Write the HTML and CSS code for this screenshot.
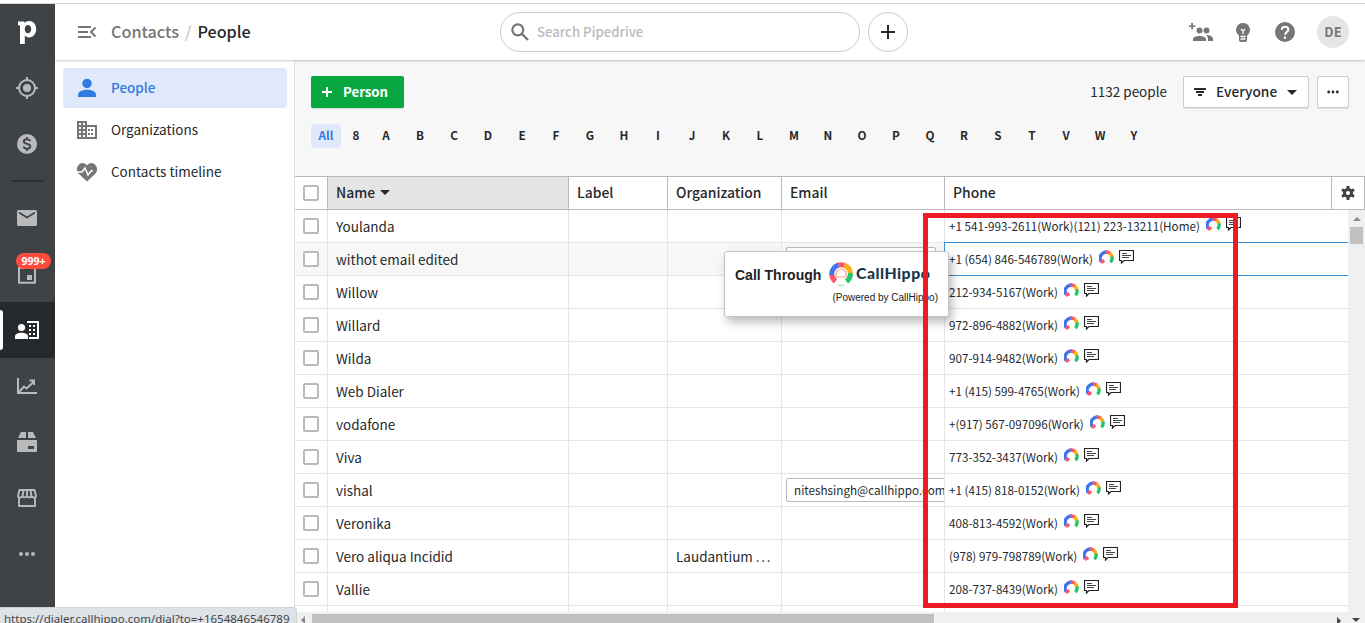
FILE: index.html
```
<!DOCTYPE html>
<html lang="en">
<head>
<meta charset="utf-8">
<title>Contacts / People</title>
<link rel="stylesheet" href="styles.css">
</head>
<body>
<svg class="defs" width="0" height="0">
  <symbol id="box" viewBox="0 0 16 16"><rect x="1" y="1" width="14" height="14" rx="1" fill="#fff" stroke="#b9babb" stroke-width="2"/></symbol>
  <symbol id="arc" viewBox="0 0 16 16"><g fill="none" stroke-width="3.600"><path d="M2.600 12.500A5.900 5.900 0 0 1 4.300 3.400" stroke="#3f74ee"/><path d="M3.800 3.800A6 6 0 0 1 8.500 2.200" stroke="#3f74ee"/><path d="M7 2.200A6 6 0 0 1 11.500 3.400" stroke="#fb566b"/><path d="M11 3.200A6 6 0 0 1 13.700 7.500" stroke="#ffab12"/><path d="M13.700 7A6 6 0 0 1 12.200 13" stroke="#23c56b"/><path d="M2 13.300 5.600 11" stroke="#fb566b"/></g></symbol>
  <symbol id="msg" viewBox="0 0 15 14"><path d="M.5.5h14v10H5L2.500 13v-2.500h-2z" fill="#fff" stroke="#222" stroke-width="1.200"/><path d="M3 3.500h5M3 5.500h9M3 7.500h7" stroke="#444" stroke-width="1"/></symbol>
</svg>
<div class="topline"></div>
<div class="app">
  <aside class="rail">
    <div class="rail-item"><svg width="20" height="26" viewBox="0 0 20 26"><path fill="#fff" fill-rule="evenodd" d="M1 2.500h6.300v1.800C8.500 2.700 10.100 1.900 12.100 1.900c4.200 0 7.100 3.400 7.100 8.100 0 5-3 8.400-7.200 8.400-1.800 0-3.300-.7-4.200-1.800V25H3V7c0-.6-.3-.8-.8-.8H1zM11 5.900c-1.900 0-3.300 1.500-3.300 4.200s1.300 4.200 3.200 4.200c2 0 3.300-1.700 3.300-4.200S12.900 5.900 11 5.900z"/></svg></div>
    <div class="rail-item"><svg width="24" height="24" viewBox="0 0 24 24"><g fill="none" stroke="currentColor" stroke-width="2"><circle cx="12" cy="12" r="8"/><path d="M12 1v4M12 19v4M1 12h4M19 12h4"/></g><circle cx="12" cy="12" r="4" fill="currentColor"/></svg></div>
    <div class="rail-item"><svg width="24" height="24" viewBox="0 0 24 24"><circle cx="12" cy="12" r="10" fill="currentColor"/><path d="M15.300 9.200C14.800 7.900 13.700 7.300 12 7.300c-2 0-3.200.9-3.200 2.200 0 3.200 6.600 1.500 6.600 4.800 0 1.500-1.300 2.400-3.300 2.400-1.900 0-3.200-.8-3.600-2.200M12 5v2M12 17v2" fill="none" stroke="#404346" stroke-width="1.900"/></svg></div>
    <div class="rail-rule"></div>
    <div class="rail-item"><svg width="24" height="24" viewBox="0 0 24 24"><rect x="2" y="4" width="20" height="16" rx="1.500" fill="currentColor"/><path d="M4 6.500l8 5 8-5" fill="none" stroke="#404346" stroke-width="1.500"/></svg></div>
    <div class="rail-item"><svg width="24" height="24" viewBox="0 0 24 24"><path d="M4 4h16v16.800H4z" fill="none" stroke="currentColor" stroke-width="2" stroke-linejoin="round"/><path d="M4 3h16v4H4zM12 13h5v5h-5z" fill="currentColor"/></svg><span class="badge">999+</span></div>
    <div class="rail-item active"><svg width="26" height="24" viewBox="0 0 26 24"><g fill="#fff"><circle cx="7.500" cy="9.500" r="3.600"/><path d="M1 21v-2.500c0-5 13-5 13 0V21z"/><path d="M13 3h12v18H15v-2h8V5H13z"/><path d="M15 7h2v2h-2zM19 7h2v2h-2zM15 11h2v2h-2zM19 11h2v2h-2zM15 15h2v2h-2zM19 15h2v2h-2z"/></g></svg></div>
    <div class="rail-item"><svg width="24" height="24" viewBox="0 0 24 24"><path d="M3 4v15h19M4 18l5-5.500 2.500 2L19 7.500M14.500 6.500H19V11" fill="none" stroke="currentColor" stroke-width="2"/></svg></div>
    <div class="rail-item"><svg width="24" height="24" viewBox="0 0 24 24"><path d="M6 2h5v6H3zM13 2h5l3 6h-8zM2 10h20v10.500c0 1-.5 1.500-1.500 1.500h-17c-1 0-1.500-.5-1.500-1.500zM13 16v3h6v-3z" fill="currentColor" fill-rule="evenodd"/></svg></div>
    <div class="rail-item"><svg width="24" height="24" viewBox="0 0 24 24"><path d="M4 11v9h16v-9M4.500 4h15L21 10c0 2-4 2-4.500 0-.8 1.800-4 1.800-4.500 0-.5 1.800-3.700 1.800-4.500 0C7 12 3 12 3 10zM8.500 4l-1 6.500M12 4v6.500M15.500 4l1 6.500" fill="none" stroke="currentColor" stroke-width="1.900" stroke-linejoin="round"/></svg></div>
    <div class="rail-item"><svg width="24" height="24" viewBox="0 0 24 24" fill="currentColor"><circle cx="6" cy="12" r="2"/><circle cx="12" cy="12" r="2"/><circle cx="18" cy="12" r="2"/></svg></div>
  </aside>
  <div class="stage">
    <header class="bar">
      <svg class="collapse" width="20" height="14" viewBox="0 0 20 14"><path d="M1 2h13M1 7h10M1 12h13M18.500 2.500 14 7l4.500 4.500" fill="none" stroke="#747678" stroke-width="2"/></svg>
      <div class="crumbs"><span class="muted">Contacts</span><span class="slash">/</span><span>People</span></div>
      <div class="search"><svg width="18" height="18" viewBox="0 0 18 18"><circle cx="6.800" cy="6.800" r="5.500" fill="none" stroke="#747678" stroke-width="2.200"/><path d="M11 11l6 6" stroke="#747678" stroke-width="2.400"/></svg><span>Search Pipedrive</span></div>
      <div class="add"><svg width="14" height="14" viewBox="0 0 14 14"><path d="M7 0v14M0 7h14" stroke="#26292c" stroke-width="2"/></svg></div>
      <div class="tools">
        <svg width="26" height="20" viewBox="0 0 26 20" fill="#747678"><path d="M3 1h2v2.500h2.500v1.500H5v2.500H3.300V5H1V3.500h2.300z"/><circle cx="11.500" cy="8.500" r="3"/><circle cx="18.500" cy="8.500" r="3"/><path d="M5 19v-2c0-4 13-4 13 0v2zM18 13c4 0 7 1.500 7 4v2h-5v-2c0-2-1-3.200-2-4z"/></svg>
        <svg width="16" height="20" viewBox="0 0 16 20"><path fill="#747678" d="M8 1a7 7 0 0 0-4 12.700V18c0 1 .5 2 2 2h4c1.500 0 2-1 2-2v-4.300A7 7 0 0 0 8 1z"/><path d="M6 7l2 2 2-2M8 9v3M5.500 14.500h5M5.500 17h5" fill="none" stroke="#fff" stroke-width="1.300"/></svg>
        <svg width="20" height="20" viewBox="0 0 20 20"><circle cx="10" cy="10" r="10" fill="#747678"/><path d="M6.800 7.800c0-4 6.600-4 6.600-.3 0 2.500-3.300 2.500-3.300 5.300M10 14.500v2.300" fill="none" stroke="#fff" stroke-width="2.100"/></svg>
        <div class="avatar">DE</div>
      </div>
    </header>
    <div class="body">
      <nav class="side">
        <div class="side-item current"><svg width="24" height="24" viewBox="0 0 24 24" fill="#317ae2"><circle cx="12" cy="7.500" r="4.700"/><path d="M3 21v-2c0-7 18-7 18 0v2z"/></svg><span>People</span></div>
        <div class="side-item"><svg width="24" height="24" viewBox="0 0 24 24"><path d="M2 3h10v4h10v14H2zM4 5v2h2V5zm4 0v2h2V5zM4 9v2h2V9zm4 0v2h2V9zm4 0v10h8V9zM4 13v2h2v-2zm4 0v2h2v-2zM4 17v2h2v-2zm4 0v2h2v-2z" fill="#747678" fill-rule="evenodd"/><path d="M13 11h2v2h-2zM16 11h2v2h-2zM13 15h2v2h-2zM16 15h2v2h-2z" fill="#747678"/></svg><span>Organizations</span></div>
        <div class="side-item"><svg width="24" height="24" viewBox="0 0 24 24"><path d="M12 21.500 4 14C-1 9 4 2.800 7.500 3c2 0 3.500 1 4.500 2.500C13 4 14.500 3 16.500 3 20 2.800 25 9 20 14z" fill="#747678"/><path d="M2 12h5l3-4 3 7 3-4h2" fill="none" stroke="#fff" stroke-width="1.600"/></svg><span>Contacts timeline</span></div>
      </nav>
      <main class="main">
        <div class="actions">
          <div class="btn-add"><svg width="10" height="10" viewBox="0 0 10 10"><path d="M5 0v10M0 5h10" stroke="#fff" stroke-width="2"/></svg><span>Person</span></div>
          <span class="count">1132 people</span>
          <div class="btn filter"><svg width="12" height="8" viewBox="0 0 12 8"><path d="M0 1h12M2 4h8M4 7h4" stroke="#26292c" stroke-width="1.800"/></svg><span>Everyone</span><i class="caret"></i></div>
          <div class="btn more"><svg width="12" height="4" viewBox="0 0 12 4" fill="#26292c"><circle cx="1.700" cy="2" r="1.400"/><circle cx="6" cy="2" r="1.400"/><circle cx="10.300" cy="2" r="1.400"/></svg></div>
        </div>
        <div class="letters"><b class="all">All</b><b class="num">8</b><b>A</b><b>B</b><b>C</b><b>D</b><b>E</b><b>F</b><b>G</b><b>H</b><b>I</b><b>J</b><b>K</b><b>L</b><b>M</b><b>N</b><b>O</b><b>P</b><b>Q</b><b>R</b><b>S</b><b>T</b><b>V</b><b>W</b><b>Y</b></div>
        <div class="head">
          <div class="check"><svg><use href="#box"/></svg></div><div class="sorted">Name<i class="caret"></i></div><div>Label</div><div>Organization</div><div>Email</div><div>Phone</div>
          <div class="gear"><svg width="14" height="14" viewBox="0 0 14 14"><circle cx="7" cy="7" r="3.600" fill="none" stroke="#404346" stroke-width="3"/><path d="M7 0v3M7 11v3M.9 3.500l2.600 1.500M10.500 9l2.600 1.500M.9 10.500 3.500 9M10.500 5l2.600-1.500" stroke="#404346" stroke-width="3"/></svg></div>
        </div>
        <div class="table">
          <div class="rows">
            <div class="row"><div class="check"><svg><use href="#box"/></svg></div><div>Youlanda</div><div></div><div></div><div></div><div class="phone"><span>+1 541-993-2611(Work)(121) 223-13211(Home)</span><svg class="arc"><use href="#arc"/></svg><svg class="msg"><use href="#msg"/></svg></div></div>
            <div class="row hover"><div class="check"><svg><use href="#box"/></svg></div><div>withot email edited</div><div></div><div></div><div class="mail"><span class="chip blank"></span></div><div class="phone focus"><span>+1 (654) 846-546789(Work)</span><svg class="arc"><use href="#arc"/></svg><svg class="msg"><use href="#msg"/></svg></div></div>
            <div class="row"><div class="check"><svg><use href="#box"/></svg></div><div>Willow</div><div></div><div></div><div></div><div class="phone"><span>212-934-5167(Work)</span><svg class="arc"><use href="#arc"/></svg><svg class="msg"><use href="#msg"/></svg></div></div>
            <div class="row"><div class="check"><svg><use href="#box"/></svg></div><div>Willard</div><div></div><div></div><div></div><div class="phone"><span>972-896-4882(Work)</span><svg class="arc"><use href="#arc"/></svg><svg class="msg"><use href="#msg"/></svg></div></div>
            <div class="row"><div class="check"><svg><use href="#box"/></svg></div><div>Wilda</div><div></div><div></div><div></div><div class="phone"><span>907-914-9482(Work)</span><svg class="arc"><use href="#arc"/></svg><svg class="msg"><use href="#msg"/></svg></div></div>
            <div class="row"><div class="check"><svg><use href="#box"/></svg></div><div>Web Dialer</div><div></div><div></div><div></div><div class="phone"><span>+1 (415) 599-4765(Work)</span><svg class="arc"><use href="#arc"/></svg><svg class="msg"><use href="#msg"/></svg></div></div>
            <div class="row"><div class="check"><svg><use href="#box"/></svg></div><div>vodafone</div><div></div><div></div><div></div><div class="phone"><span>+(917) 567-097096(Work)</span><svg class="arc"><use href="#arc"/></svg><svg class="msg"><use href="#msg"/></svg></div></div>
            <div class="row"><div class="check"><svg><use href="#box"/></svg></div><div>Viva</div><div></div><div></div><div></div><div class="phone"><span>773-352-3437(Work)</span><svg class="arc"><use href="#arc"/></svg><svg class="msg"><use href="#msg"/></svg></div></div>
            <div class="row"><div class="check"><svg><use href="#box"/></svg></div><div>vishal</div><div></div><div></div><div class="mail"><span class="chip">niteshsingh@callhippo.com</span></div><div class="phone"><span>+1 (415) 818-0152(Work)</span><svg class="arc"><use href="#arc"/></svg><svg class="msg"><use href="#msg"/></svg></div></div>
            <div class="row"><div class="check"><svg><use href="#box"/></svg></div><div>Veronika</div><div></div><div></div><div></div><div class="phone"><span>408-813-4592(Work)</span><svg class="arc"><use href="#arc"/></svg><svg class="msg"><use href="#msg"/></svg></div></div>
            <div class="row"><div class="check"><svg><use href="#box"/></svg></div><div>Vero aliqua Incidid</div><div></div><div>Laudantium <span class="dots">...</span></div><div></div><div class="phone"><span>(978) 979-798789(Work)</span><svg class="arc"><use href="#arc"/></svg><svg class="msg"><use href="#msg"/></svg></div></div>
            <div class="row"><div class="check"><svg><use href="#box"/></svg></div><div>Vallie</div><div></div><div></div><div></div><div class="phone"><span>208-737-8439(Work)</span><svg class="arc"><use href="#arc"/></svg><svg class="msg"><use href="#msg"/></svg></div></div>
            <div class="row"><div></div><div></div><div></div><div></div><div></div><div></div></div>
          </div>
          <div class="vscroll"><i class="up"></i><div class="vthumb"></div></div>
        </div>
        <div class="hscroll"><i class="left"></i><div class="hthumb"></div><i class="right"></i><i class="down"></i></div>
      </main>
    </div>
  </div>
</div>
<div class="popup">
  <div class="popup-main"><span class="call">Call Through</span>
    <svg width="24" height="24" viewBox="0 0 24 24"><g fill="none" stroke-width="5"><path d="M2.900 13.500A9.300 9.300 0 0 1 9.500 3" stroke="#3f74ee"/><path d="M9.500 3A9.300 9.300 0 0 1 15.500 3.400" stroke="#fb566b"/><path d="M15.500 3.400A9.300 9.300 0 0 1 21.300 11" stroke="#ffab12"/><path d="M21.300 11A9.300 9.300 0 0 1 17.500 19.500" stroke="#23c56b"/><path d="M3 13A9.300 9.300 0 0 0 6.500 19.500" stroke="#fb566b"/></g><path d="M7 12a5 5 0 0 1 10 0v3H7z" fill="none" stroke="#ffa08a" stroke-width="1.200"/><path d="M8.500 23q3.500 1 7-.2" fill="none" stroke="#8fe0b4"/></svg>
    <span class="brand">CallHippo</span></div>
  <div class="powered">(Powered by CallHippo)</div>
</div>
<div class="marker"></div>
<div class="status">https://dialer.callhippo.com/dial?to=+1654846546789</div>
</body>
</html>
```
FILE: styles.css
```
* { box-sizing: border-box; }
body { margin: 0; width: 1365px; height: 623px; overflow: hidden; background: #fff; color: #26292c; font: 13.500px/20px "Noto Sans CJK SC", "Noto Sans", sans-serif; position: relative; }
svg { display: block; flex: none; }
.defs { position: absolute; }
.topline { height: 4px; border-bottom: 1px solid #d9d9d9; }
.app { display: flex; height: 619px; }
.rail { width: 55px; flex: none; background: #404346; color: #b9babb; }
.rail-item { height: 56px; display: flex; align-items: center; justify-content: center; position: relative; padding-right: 1px; }
.rail-rule { height: 2px; margin: 8px 12px 8px 11px; background: #26292c; opacity: .7; }
.rail-item.active { background: #26292c; }
.rail-item.active::before { content: ""; position: absolute; left: 0; top: 8px; width: 3px; height: 40px; background: #fff; border-radius: 0 3px 3px 0; }
.badge { position: absolute; left: 16px; top: 7px; width: 35px; height: 16px; border-radius: 8px; background: #ff4b3e; color: #fff; font: bold 10.500px/16px "Noto Sans", sans-serif; text-align: center; }
.stage { flex: 1; min-width: 0; display: flex; flex-direction: column; }
.bar { height: 56px; flex: none; display: flex; align-items: center; background: #fff; box-shadow: 0 1px 2px rgba(38,41,44,.25); position: relative; padding: 0 16px 0 22px; }
.crumbs { display: flex; gap: 6px; margin-left: 14px; width: 389px; font-size: 16.200px; font-weight: 500; padding-bottom: 2px; }
.muted { color: #747678; }
.slash { color: #b9babb; font-weight: 400; }
.search { width: 360px; height: 40px; border: 1px solid #cbcccd; border-radius: 20px; display: flex; align-items: center; gap: 7px; padding-left: 10px; color: #b9babb; font-weight: 500; font-size: 13.200px; }
.search span { padding-left: 1px; }
.side-item span, .filter span { padding-bottom: 2px; }
.add { width: 40px; height: 40px; border: 1px solid #cbcccd; border-radius: 50%; margin-left: 8px; display: grid; place-items: center; }
.tools { margin-left: auto; display: flex; align-items: center; gap: 22px; }
.tools svg:first-child { margin-right: -1px; }
.tools svg:nth-child(2) { margin-right: 2px; }
.avatar { width: 32px; height: 32px; border-radius: 50%; background: #e5e5e5; color: #747678; font-weight: 700; font-size: 13px; line-height: 31px; text-align: center; }
.body { flex: 1; display: flex; min-height: 0; }
.side { width: 240px; flex: none; padding: 8px 7px 0 8px; border-right: 1px solid #e0e0e0; }
.side-item { height: 40px; margin-bottom: 2px; border-radius: 4px; display: flex; align-items: center; padding-left: 12px; gap: 12px; }
.current { background: #dfe9f9; color: #317ae2; font-weight: 500; }
.main { flex: 1; min-width: 0; background: #f7f7f7; }
.actions { height: 48px; padding: 16px 16px 0; display: flex; align-items: center; }
.btn-add { width: 93px; height: 32px; background: #08a742; color: #fff; border-radius: 2px; display: flex; align-items: center; padding-left: 11px; gap: 11px; font-weight: 700; font-size: 13.200px; box-shadow: 0 1px 1px rgba(0,0,0,.15); }
.count { margin: 0 16px 0 auto; padding-bottom: 2px; }
.btn { height: 32px; background: #fff; border: 1px solid #cbcccd; border-radius: 2px; display: flex; align-items: center; box-shadow: 0 1px 1px rgba(0,0,0,.1); }
.filter { width: 126px; padding-left: 10px; gap: 10px; font-weight: 500; font-size: 13.700px; }
.more { width: 32px; margin-left: 8px; justify-content: center; }
.caret { border: 5px solid transparent; border-top-color: currentColor; border-bottom: 0; }
.letters { display: flex; gap: 4px; margin: 16px 16px 28px; height: 24px; font-size: 11.700px; line-height: 22px; }
.letters b { width: 30px; text-align: center; font-weight: 700; }
.letters .all { background: #dfe9f9; color: #317ae2; border-radius: 4px; }
.letters .num { width: 22px; }
.head, .row { display: grid; grid-template-columns: 33px 241px 99px 114px 163px 1fr; }
.head { grid-template-columns: 33px 241px 99px 114px 163px 387px 1fr; height: 34px; border: 1px solid #b9babb; border-left: 0; background: #fff; font-weight: 500; font-size: 13.900px; }
.head > div { border-right: 1px solid #b9babb; padding: 0 0 2px 8px; line-height: 30px; display: flex; align-items: center; }
.head > .check { padding-bottom: 0; }
.head .gear { border: 0; padding: 0 0 0 9px; }
.sorted { background: #e5e5e5; gap: 5px; }
.check svg { width: 16px; height: 16px; }
.table { display: flex; height: 402px; background: #fff; overflow: hidden; }
.rows { width: 1053px; }
.row { height: 33px; border-bottom: 1px solid #e5e5e5; }
.row > div { border-right: 1px solid #e5e5e5; padding-left: 8px; line-height: 32px; white-space: nowrap; overflow: hidden; min-width: 0; }
.row > div:last-child { border-right: 0; }
.row .check { display: flex; align-items: center; }
.hover { background: #f7f7f7; }
.row > .mail { padding: 4px 0 0 4px; }
.chip { display: block; width: max-content; height: 24px; border: 1px solid #b9babb; border-radius: 2px; background: #fff; padding: 0 7px; font-size: 11.700px; line-height: 21px; }
.blank { width: 150px; }
.row > .phone { display: flex; align-items: center; padding-left: 4px; font-size: 11.670px; overflow: visible; }
.row > .focus { background: #fff; border: 1px solid #3490d8; border-right: 0; margin: -1px 0 -1px -1px; padding-left: 4px; }
.arc { width: 15px; height: 15px; margin: -4px 5px 0 6px; }
.msg { width: 15px; height: 14px; margin-top: -5px; }
.dots { letter-spacing: 1.700px; }
.vscroll { width: 17px; background: #f0f0f0; padding: 7px 2px; }
.up { display: block; margin: 0 3px 6px; border: 4px solid transparent; border-bottom-color: #8a8a8a; border-top: 0; width: 8px; }
.vthumb { width: 13px; height: 17px; background: #c1c1c1; }
.hscroll { height: 11px; background: #f0f0f0; display: flex; padding-top: 2px; }
.left { border: 4px solid transparent; border-right-color: #8a8a8a; border-left: 0; margin: 2px 7px 0 6px; height: 8px; }
.hthumb { width: 622px; height: 9px; background: #c1c1c1; }
.right { border: 4px solid transparent; border-left-color: #444; border-right: 0; margin: 3px 0 0 auto; height: 8px; }
.down { border: 4px solid transparent; border-top-color: #444; border-bottom: 0; margin: 4px 5px 0 11px; height: 4px; }
.popup { position: absolute; left: 724px; top: 251px; width: 225px; height: 66px; background: #fff; border: 1px solid #c4c4c4; border-radius: 3px; box-shadow: 3px 5px 10px rgba(0,0,0,.28); padding: 10px 10px 0; color: #222; }
.popup-main { display: flex; align-items: center; height: 24px; white-space: nowrap; }
.call { font: bold 14px/20px "Liberation Sans", Arial, sans-serif; width: 94px; flex: none; padding-top: 1px; }
.brand { font: 900 15.800px/20px Lato, sans-serif; color: #19374a; margin-left: 3px; letter-spacing: .5px; padding-bottom: 2px; }
.powered { font: 10px/12px "Liberation Sans", Arial, sans-serif; text-align: right; margin-top: 6px; white-space: nowrap; }
.marker { position: absolute; left: 923px; top: 213px; width: 315px; height: 395px; border: 5px solid #ed1c24; }
.status { position: absolute; left: 0; top: 607px; width: 297px; height: 16px; background: #dee1e6; border: 1px solid #cfd2d6; border-width: 1px 1px 0 0; border-radius: 0 4px 0 0; color: #43474b; font: 11.500px/22px "Noto Sans", sans-serif; padding-left: 4px; overflow: hidden; white-space: nowrap; }
```
